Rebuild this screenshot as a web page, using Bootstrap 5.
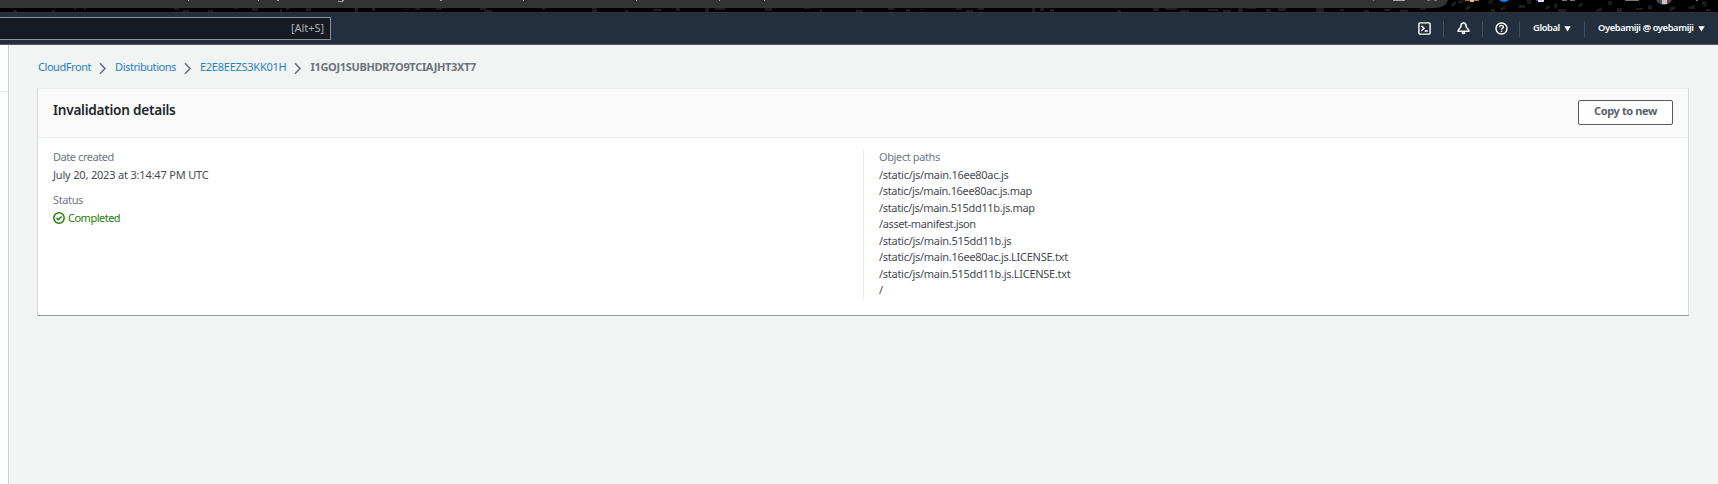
<!DOCTYPE html>
<html lang="en">
<head>
<meta charset="utf-8">
<title>Invalidation details - CloudFront</title>
<link href="https://cdn.jsdelivr.net/npm/bootstrap@5.3.0/dist/css/bootstrap.min.css" rel="stylesheet">
<style>
body{font-family:"Noto Sans","Open Sans",sans-serif;font-size:11px;line-height:16.5px;background:#f2f3f3;color:#545b64;height:484px;overflow:hidden}
.chrome{height:12px;background:#000}
.chrome svg{display:block}
.topnav{height:33px;background:#232f3e;border-top:1px solid #34322d;border-bottom:1px solid #545b64;color:#fff;font-weight:600;font-size:9.3px;letter-spacing:-.37px}
.search{width:331px;height:23px;margin-top:4px;padding-right:6px;background:#161a22;border:1px solid #879596;border-left:0;color:#a7b0b1;font-weight:400;font-size:11px;letter-spacing:-.05px}
.tools{height:31px}
.tool{height:16px;border-left:1px solid #414d5c;display:flex;align-items:center}
.tool:first-child{border:0}
.w-a{width:38px;padding-left:13px}
.w-b{width:39px;padding-left:13px}
.w-c{width:37px;padding-left:12px}
.w-d{width:65px;padding-left:13px}
.w-e{width:134px;padding-left:13px}
.side{width:9px;background:#fff;border-right:1px solid #cdd3d3}
.side div{height:47px;border-bottom:1px solid #eaeded}
.crumbs{height:43px;padding:2px 0 0 29px}
.crumbs a{color:#1f83c4;text-decoration:none}
.crumbs b{color:#6b737b;font-weight:700}
.crumbs svg{flex:none;margin:0 8px 0 7px;position:relative;top:1px}
.panel{width:1652px;height:228px;margin-left:28px;background:#fff;border:1px solid #d5dbdb;border-top-color:#eaeded;border-bottom-color:#8f9b9b}
.panel-head{height:49px;background:#fafafa;border-bottom:1px solid #eaeded;padding:0 15px}
h2{font-size:13.6px;font-weight:600;color:#22252b;line-height:20px;letter-spacing:-.25px;margin:0 0 6px}
.copy{width:95px;height:25px;border:1px solid #545b64;border-radius:2px;background:#fff;color:#5b626b;font-weight:700;font-size:11px;margin-bottom:2px;padding:0 0 3px;line-height:20px;letter-spacing:-.38px}
.lbl{color:#6f777f}
.val{color:#464a50}
.facts{width:825px;padding:11px 0 0 15px}
.field{margin-bottom:9px}
.field .lbl{margin-bottom:1px}
.paths{border-left:1px solid #eaeded;height:150px;margin-top:12px;padding-left:15px}
.paths .lbl{margin:-1px 0 1.4px}
.ok{color:#1d8102}
.ok svg{margin-right:3px}
.t0{letter-spacing:-.25px}.t1{letter-spacing:-.18px}.t2{letter-spacing:-.28px}.t3{letter-spacing:-.33px}.t4{letter-spacing:-.38px}.t5{letter-spacing:-.44px}.t6{letter-spacing:-.5px}
</style>
</head>
<body class="d-flex flex-column">
<div class="chrome">
<svg width="1718" height="12" viewBox="0 0 1718 12">
  <path fill="#1d1d1d" d="M13 10h4v2h-4zM52 10h3v2h-3zM74 8h2v2h-2zM84 8h2v2h-2zM174 8h5v2h-5zM183 10h6v2h-6zM208 10h5v2h-5zM234 8h4v1h-4zM252 8h6v3h-6zM280 9h2v3h-2zM286 8h3v2h-3zM306 8h5v3h-5zM355 8h3v4h-3zM372 8h3v3h-3zM405 9h4v1h-4zM415 8h5v2h-5zM436 8h6v2h-6zM480 8h6v2h-6zM484 10h8v2h-8zM542 8h3v2h-3zM592 8h5v4h-5zM625 10h3v2h-3zM653 9h8v2h-8zM676 8h4v3h-4zM705 8h4v4h-4zM715 8h10v2h-10zM765 8h7v3h-7zM804 8h6v1h-6zM820 9h2v3h-2zM856 10h6v2h-6zM888 8h6v2h-6zM906 9h4v3h-4zM920 9h3v1h-3zM956 8h6v2h-6zM966 10h7v2h-7zM978 8h6v2h-6zM1032 8h3v4h-3zM1040 8h4v3h-4zM1050 9h4v3h-4zM1117 10h4v2h-4zM1153 8h6v3h-6zM1165 8h12v2h-12zM1180 10h9v2h-9zM1208 9h10v2h-10zM1223 10h8v2h-8zM1238 8h5v4h-5zM1246 8h10v1h-10zM1266 9h5v3h-5zM1278 8h8v3h-8zM1316 8h8v4h-8zM1340 9h4v2h-4zM1364 10h5v2h-5zM1384 9h7v2h-7zM1400 10h8v2h-8zM1420 8h6v2h-6zM1451 4l5-3v3l-4 3zM1458 1l6-1-1 3-4 1zM1465 8l3-3 3 1-1 3-4 1zM1487 3l4-3h3l-3 4zM1491 9h4v3h-4zM1500 8l5-2v3l-4 2zM1518 5h7v3h-6zM1527 0h4v4h-4zM1545 7l5-2v3l-4 2zM1554 3l4 1-1 5-3-1zM1558 9h8v3h-8zM1578 5l5-3v3l-4 3zM1596 10l6-3v4l-5 1zM1608 1h4v4h-4zM1617 8h5v4h-5zM1636 8h7v2h-7zM1648 5l5 1-2 4-3-1zM1669 8l6-2v3l-5 3zM1688 7l7-2v4h-6zM1702 1l5 1-1 5-4-2zM1706 9h5v2h-5z"/>
  <path fill="#333" d="M0 0h1448q-3 8-13 8H0z"/>
  <path fill="#a5a7a8" d="M188 0h1v1h-1zM258 0h1v1h-1zM277 0h2v1h-2zM338 1h5v1h-5zM342 0h2v1h-2zM440 0h2v1h-2zM523 0h1v1h-1zM636 0h1v1h-1zM719 0h1v1h-1zM764 0h1v1h-1zM1393 0h12v1h-12z"/>
  <path fill="#777" d="M1373 0h1v1h-1zM1427 0h3v1h-3zM1434 0h3v1h-3zM1562 0h5v1h-5zM1570 0h5v1h-5zM1625 0h14v1h-14zM1696 0h2v1h-2z"/>
  <path fill="#b56b32" d="M1465 0h5v1h-5zM1474 0h5v1h-5z"/><path fill="#d8b8a4" d="M1470 0h4v2h-4z"/>
  <path fill="#0a84ff" d="M1499 0h10q-5 4-10 0"/>
  <path fill="#453ca0" d="M1536 0h4v1h-4z"/><path fill="#dcdcea" d="M1538 0h6v2h-6z"/>
  <circle cx="1664" cy="-3.5" r="8.5" fill="#4b4d61"/><path fill="#d5c4b5" d="M1662 0h5v4h-5z"/>
</svg>
</div>
<header class="topnav d-flex justify-content-between">
  <div class="search d-flex align-items-center justify-content-end"><span>[Alt+S]</span></div>
  <div class="tools d-flex align-items-center">
    <div class="tool w-a"><svg width="13" height="13" viewBox="0 0 13 13" fill="none" stroke="#fff" stroke-width="1.4"><rect x=".9" y=".9" width="11.2" height="11.2" rx="1"/><path d="M3.4 3.7 6 6.2 3.4 8.7M6.6 9h3.2"/></svg></div>
    <div class="tool w-b"><svg width="13" height="13" viewBox="0 0 13 13" fill="none" stroke="#fff" stroke-width="1.5" stroke-linejoin="round"><path d="M6.5 1C4.7 1 4 2.3 4 4 4 6.3 1 7.3 1 9.3h11C12 7.3 9 6.3 9 4 9 2.3 8.3 1 6.5 1z"/><path d="M5 10.3q1.5 2.6 3 0" fill="#fff"/></svg></div>
    <div class="tool w-c"><svg width="13" height="13" viewBox="0 0 13 13" fill="none" stroke="#fff" stroke-width="1.4"><circle cx="6.5" cy="6.5" r="5.5"/><path d="M4.6 5.2c0-2.5 3.8-2.3 3.8-.2 0 1.3-1.9 1.3-1.9 2.7M6.5 8.7V10"/></svg></div>
    <div class="tool w-d"><span>Global</span><svg class="ms-1" width="7" height="6"><path d="M.3.3h6.4L3.5 5.6z" fill="#fff"/></svg></div>
    <div class="tool w-e"><span>Oyebamiji @ oyebamiji</span><svg class="ms-1" width="7" height="6"><path d="M.3.3h6.4L3.5 5.6z" fill="#fff"/></svg></div>
  </div>
</header>
<div class="d-flex flex-grow-1">
  <aside class="side"><div></div></aside>
  <main class="flex-grow-1">
    <nav class="crumbs d-flex align-items-center">
      <a class="t5" href="#">CloudFront</a>
      <svg width="9" height="13" viewBox="0 0 9 13" fill="none" stroke="#687078" stroke-width="1.6"><path d="M2 1.2 7 6.5 2 11.8"/></svg>
      <a class="t5" href="#">Distributions</a>
      <svg width="9" height="13" viewBox="0 0 9 13" fill="none" stroke="#687078" stroke-width="1.6"><path d="M2 1.2 7 6.5 2 11.8"/></svg>
      <a class="t0" href="#">E2E8EEZS3KK01H</a>
      <svg width="9" height="13" viewBox="0 0 9 13" fill="none" stroke="#687078" stroke-width="1.6"><path d="M2 1.2 7 6.5 2 11.8"/></svg>
      <b class="t3">I1GOJ1SUBHDR7O9TCIAJHT3XT7</b>
    </nav>
    <section class="panel">
      <div class="panel-head d-flex align-items-center justify-content-between"><h2>Invalidation details</h2><button class="btn copy">Copy to new</button></div>
      <div class="d-flex">
        <div class="facts">
          <div class="field">
            <div class="lbl t5">Date created</div>
            <div class="val t1">July 20, 2023 at 3:14:47 PM UTC</div>
          </div>
          <div class="field">
            <div class="lbl t4">Status</div>
            <div class="ok d-flex align-items-center"><svg width="12" height="12" viewBox="0 0 12 12" fill="none" stroke="#1d8102" stroke-width="1.5"><circle cx="6" cy="6" r="5.2"/><path d="M3.4 6 5.3 7.8 8.6 4.5"/></svg><span class="t6">Completed</span></div>
          </div>
        </div>
        <div class="paths val">
          <div class="lbl t4">Object paths</div>
          <div class="t2">/static/js/main.16ee80ac.js</div>
          <div class="t3">/static/js/main.16ee80ac.js.map</div>
          <div class="t3">/static/js/main.515dd11b.js.map</div>
          <div class="t4">/asset-manifest.json</div>
          <div class="t2">/static/js/main.515dd11b.js</div>
          <div class="t2">/static/js/main.16ee80ac.js.LICENSE.txt</div>
          <div class="t2">/static/js/main.515dd11b.js.LICENSE.txt</div>
          <div>/</div>
        </div>
      </div>
    </section>
  </main>
</div>
<script src="https://cdn.jsdelivr.net/npm/bootstrap@5.3.0/dist/js/bootstrap.bundle.min.js"></script>
</body>
</html>
